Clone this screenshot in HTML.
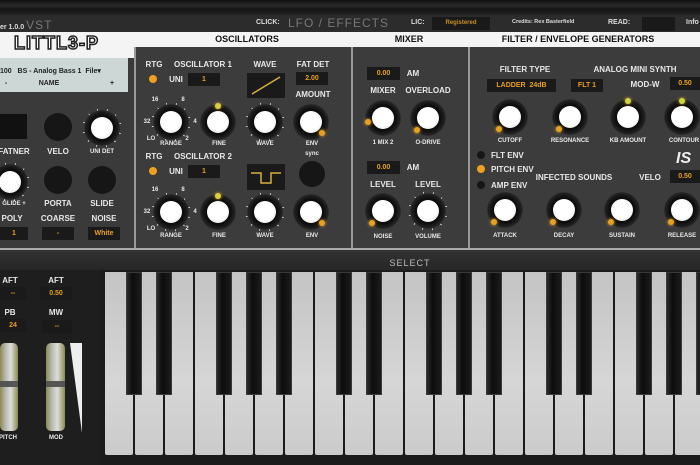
<!DOCTYPE html><html><head><style>
*{margin:0;padding:0;box-sizing:border-box}
body{width:700px;height:465px;overflow:hidden;background:#1b1b1b;font-family:"Liberation Sans",sans-serif;position:relative}
.a{position:absolute}
.t{position:absolute;color:#e8e8e8;font-weight:bold;font-size:8px;white-space:nowrap;transform:translateX(-50%)}
.s{font-size:6px}
.k{position:absolute;width:36px;height:36px;margin:-18px 0 0 -18px;border-radius:50%;background:radial-gradient(circle,#0e0e0e 50%,#222 66%,#2e2e2e 70%,transparent 72%)}
.k::after{content:"";position:absolute;left:7px;top:7px;width:22px;height:22px;border-radius:50%;background:radial-gradient(circle at 45% 40%,#fff 55%,#ddd 100%)}
.kt{position:absolute;width:40px;height:40px;margin:-20px 0 0 -20px;border-radius:50%;background:repeating-conic-gradient(from -135deg,#ddd 0 3deg,transparent 3deg 30deg);-webkit-mask:radial-gradient(circle,transparent 13px,#000 14px,#000 19px,transparent 20px)}
.dot{position:absolute;width:6px;height:6px;margin:-3px 0 0 -3px;border-radius:50%;background:#e8a020;box-shadow:0 0 3px #f0b030}
.led{position:absolute;width:8px;height:8px;margin:-4px 0 0 -4px;border-radius:50%}
.box{position:absolute;background:#1a1a1a;color:#e8a020;font-size:7px;font-weight:bold;text-align:center;line-height:13px;height:13px}
.bc{position:absolute;border-radius:50%;background:#161616}
.w{position:absolute;top:272px;width:28px;height:183px;background:linear-gradient(#c4c4c4,#d6d6d6 60%,#cbcbcb);border-radius:0 0 2px 2px}
.b{position:absolute;top:272px;width:16px;height:123px;background:linear-gradient(90deg,#2a2a2a,#0c0c0c 40%,#1c1c1c);border:1px solid #3a3a3a}
</style></head><body>
<div class="a" style="left:0;top:0;width:700px;height:15px;background:linear-gradient(#111,#2a2a2a 40%,#151515 60%,#222)"></div>
<div class="a" style="left:0;top:15px;width:700px;height:17px;background:#2c2c2c"></div>
<div class="a" style="left:0;top:18px;font-size:7px;color:#ddd;font-weight:bold">er 1.0.0 <span style="font-size:12px;color:#777;letter-spacing:1px;font-weight:normal">VST</span></div>
<div class="a" style="left:256px;top:19px;font-size:7px;color:#ddd;font-weight:bold">CLICK:</div>
<div class="a" style="left:288px;top:16px;font-size:12px;color:#777;letter-spacing:1px">LFO / EFFECTS</div>
<div class="a" style="left:411px;top:19px;font-size:7px;color:#ddd;font-weight:bold">LIC:</div>
<div class="box" style="left:432px;top:17px;width:58px;font-size:6px;color:#c89020">Registered</div>
<div class="a" style="left:512px;top:19px;font-size:5.5px;color:#ddd;font-weight:bold">Credits: Rex Basterfield</div>
<div class="a" style="left:608px;top:19px;font-size:7px;color:#ddd;font-weight:bold">READ:</div>
<div class="a" style="left:642px;top:17px;width:33px;height:14px;background:#1a1a1a"></div>
<div class="a" style="left:686px;top:19px;font-size:7px;color:#ddd;font-weight:bold">Info</div>
<div class="a" style="left:0;top:32px;width:700px;height:15px;background:#f4f4f4"></div>
<div class="a" style="left:0;top:32px;width:134px;height:26px;background:#f4f4f4"></div>
<div class="a" style="left:14px;top:33px;font-size:18px;font-weight:bold;color:#fff;-webkit-text-stroke:1.5px #222;letter-spacing:1px">LITTL3-P</div>
<div class="t" style="left:247px;top:34px;color:#111;font-size:9px">OSCILLATORS</div>
<div class="t" style="left:409px;top:34px;color:#111;font-size:9px">MIXER</div>
<div class="t" style="left:578px;top:34px;color:#111;font-size:9px">FILTER / ENVELOPE GENERATORS</div>
<div class="a" style="left:0;top:58px;width:134px;height:190px;background:#3a3a3a"></div>
<div class="a" style="left:134px;top:47px;width:217px;height:201px;background:#3c3c3c;border-left:2px solid #999"></div>
<div class="a" style="left:351px;top:47px;width:117px;height:201px;background:#3c3c3c;border-left:2px solid #999"></div>
<div class="a" style="left:468px;top:47px;width:232px;height:201px;background:#3c3c3c;border-left:2px solid #999"></div>
<div class="a" style="left:0;top:248px;width:700px;height:2px;background:#aaa"></div>
<div class="a" style="left:0;top:250px;width:700px;height:20px;background:linear-gradient(#333,#262626)"></div>
<div class="t" style="left:410px;top:258px;color:#bbb;font-size:9px;font-weight:normal;letter-spacing:1px">SELECT</div>
<div class="a" style="left:0;top:58px;width:128px;height:34px;background:#cdd7d6"></div>
<div class="a" style="left:0;top:67px;font-size:7px;font-weight:bold;color:#222">100&nbsp;&nbsp; BS - Analog Bass 1&nbsp; File▾</div>
<div class="t" style="left:49px;top:80px;color:#222;font-size:7px">NAME</div>
<div class="t" style="left:6px;top:80px;color:#222;font-size:7px">-</div>
<div class="t" style="left:112px;top:80px;color:#222;font-size:7px">+</div>
<div class="a" style="left:0;top:114px;width:27px;height:25px;background:#111"></div>
<div class="bc" style="left:44px;top:113px;width:28px;height:28px"></div>
<div class="bc" style="left:44px;top:166px;width:28px;height:28px"></div>
<div class="bc" style="left:88px;top:166px;width:28px;height:28px"></div>
<div class="kt" style="left:102px;top:128px"></div><div class="k" style="left:102px;top:128px"></div>
<div class="kt" style="left:10px;top:182px"></div><div class="k" style="left:10px;top:182px"></div>
<div class="t" style="left:14px;top:147px">FATNER</div>
<div class="t" style="left:58px;top:147px">VELO</div>
<div class="t s" style="left:102px;top:149px">UNI DET</div>
<div class="t s" style="left:14px;top:201px">GLIDE +</div>
<div class="t" style="left:58px;top:199px">PORTA</div>
<div class="t" style="left:102px;top:199px">SLIDE</div>
<div class="t" style="left:12px;top:214px">POLY</div>
<div class="t" style="left:58px;top:214px">COARSE</div>
<div class="t" style="left:104px;top:214px">NOISE</div>
<div class="box" style="left:0;top:227px;width:28px">1</div>
<div class="box" style="left:42px;top:227px;width:32px">-</div>
<div class="box" style="left:88px;top:227px;width:32px">White</div>
<div class="t" style="left:154px;top:60px">RTG</div>
<div class="t" style="left:203px;top:60px">OSCILLATOR 1</div>
<div class="t" style="left:265px;top:60px">WAVE</div>
<div class="t" style="left:313px;top:60px">FAT DET</div>
<div class="led" style="left:153px;top:79px;background:#f0a020"></div>
<div class="t" style="left:176px;top:75px">UNI</div>
<div class="box" style="left:188px;top:73px;width:32px">1</div>
<div class="a" style="left:247px;top:73px;width:38px;height:25px;background:#1a1a1a"><svg width="38" height="25"><line x1="5" y1="21" x2="33" y2="4" stroke="#d8b040" stroke-width="1.5"/></svg></div>
<div class="box" style="left:296px;top:72px;width:32px">2.00</div>
<div class="t" style="left:313px;top:90px">AMOUNT</div>
<div class="t s" style="left:155px;top:97px">16</div><div class="t s" style="left:183px;top:97px">8</div>
<div class="t s" style="left:147px;top:119px">32</div><div class="t s" style="left:195px;top:119px">4</div>
<div class="t s" style="left:151px;top:136px">LO</div><div class="t s" style="left:187px;top:136px">2</div>
<div class="t" style="left:154px;top:152px">RTG</div>
<div class="t" style="left:203px;top:152px">OSCILLATOR 2</div>
<div class="led" style="left:153px;top:171px;background:#f0a020"></div>
<div class="t" style="left:176px;top:167px">UNI</div>
<div class="box" style="left:188px;top:165px;width:32px">1</div>
<div class="a" style="left:247px;top:164px;width:38px;height:26px;background:#1a1a1a"><svg width="38" height="26"><path d="M4 9H14V19H24V9H34" fill="none" stroke="#d8b040" stroke-width="1.5"/></svg></div>
<div class="bc" style="left:299px;top:161px;width:26px;height:26px"></div>
<div class="t s" style="left:155px;top:187px">16</div><div class="t s" style="left:183px;top:187px">8</div>
<div class="t s" style="left:147px;top:209px">32</div><div class="t s" style="left:195px;top:209px">4</div>
<div class="t s" style="left:151px;top:226px">LO</div><div class="t s" style="left:187px;top:226px">2</div>
<div class="kt" style="left:171px;top:122px"></div><div class="k" style="left:171px;top:122px"></div>
<div class="k" style="left:218px;top:122px"></div><div class="dot" style="left:218px;top:106px;background:#d8d040"></div>
<div class="kt" style="left:265px;top:122px"></div><div class="k" style="left:265px;top:122px"></div>
<div class="k" style="left:311px;top:122px"></div><div class="dot" style="left:322px;top:133px"></div>
<div class="kt" style="left:171px;top:212px"></div><div class="k" style="left:171px;top:212px"></div>
<div class="k" style="left:218px;top:212px"></div><div class="dot" style="left:218px;top:196px;background:#d8d040"></div>
<div class="kt" style="left:265px;top:212px"></div><div class="k" style="left:265px;top:212px"></div>
<div class="k" style="left:311px;top:212px"></div><div class="dot" style="left:322px;top:223px"></div>
<div class="t s" style="left:171px;top:141px">RANGE</div><div class="t s" style="left:219px;top:141px">FINE</div><div class="t s" style="left:265px;top:141px">WAVE</div>
<div class="t s" style="left:312px;top:141px">ENV</div><div class="t s" style="left:312px;top:151px">sync</div>
<div class="t s" style="left:171px;top:233px">RANGE</div><div class="t s" style="left:219px;top:233px">FINE</div><div class="t s" style="left:265px;top:233px">WAVE</div><div class="t s" style="left:312px;top:233px">ENV</div>
<div class="box" style="left:367px;top:67px;width:33px">0.00</div>
<div class="t" style="left:413px;top:69px">AM</div>
<div class="t" style="left:383px;top:86px">MIXER</div>
<div class="t" style="left:428px;top:86px">OVERLOAD</div>
<div class="k" style="left:383px;top:118px"></div><div class="dot" style="left:368px;top:122px"></div>
<div class="k" style="left:428px;top:118px"></div><div class="dot" style="left:417px;top:130px"></div>
<div class="t s" style="left:383px;top:140px">1 MIX 2</div><div class="t s" style="left:428px;top:140px">O-DRIVE</div>
<div class="box" style="left:367px;top:161px;width:33px">0.00</div>
<div class="t" style="left:413px;top:163px">AM</div>
<div class="t" style="left:383px;top:180px">LEVEL</div><div class="t" style="left:428px;top:180px">LEVEL</div>
<div class="k" style="left:383px;top:211px"></div><div class="dot" style="left:372px;top:223px"></div>
<div class="kt" style="left:428px;top:211px"></div><div class="k" style="left:428px;top:211px"></div>
<div class="t s" style="left:383px;top:234px">NOISE</div><div class="t s" style="left:428px;top:234px">VOLUME</div>
<div class="t" style="left:525px;top:65px">FILTER TYPE</div>
<div class="t" style="left:635px;top:65px">ANALOG MINI SYNTH</div>
<div class="box" style="left:487px;top:79px;width:69px">LADDER&nbsp; 24dB</div>
<div class="box" style="left:571px;top:79px;width:32px">FLT 1</div>
<div class="t" style="left:645px;top:80px">MOD-W</div>
<div class="box" style="left:670px;top:77px;width:30px">0.50</div>
<div class="k" style="left:510px;top:117px"></div><div class="dot" style="left:499px;top:129px"></div>
<div class="k" style="left:570px;top:117px"></div><div class="dot" style="left:559px;top:129px"></div>
<div class="k" style="left:628px;top:117px"></div><div class="dot" style="left:628px;top:101px;background:#c8d840"></div>
<div class="k" style="left:682px;top:117px"></div><div class="dot" style="left:682px;top:101px;background:#c8d840"></div>
<div class="t s" style="left:510px;top:138px">CUTOFF</div><div class="t s" style="left:570px;top:138px">RESONANCE</div><div class="t s" style="left:628px;top:138px">KB AMOUNT</div><div class="t s" style="left:684px;top:138px">CONTOUR</div>
<div class="led" style="left:481px;top:155px;background:#161616"></div><div class="a" style="left:491px;top:151px;font-size:8px;font-weight:bold;color:#e8e8e8">FLT ENV</div>
<div class="led" style="left:481px;top:169px;background:#f0a020"></div><div class="a" style="left:491px;top:165px;font-size:8px;font-weight:bold;color:#e8e8e8">PITCH ENV</div>
<div class="led" style="left:481px;top:185px;background:#161616"></div><div class="a" style="left:491px;top:181px;font-size:8px;font-weight:bold;color:#e8e8e8">AMP ENV</div>
<div class="a" style="left:676px;top:150px;font-size:16px;font-weight:bold;color:#eee;font-style:italic">IS</div>
<div class="t" style="left:574px;top:173px">INFECTED SOUNDS</div>
<div class="t" style="left:650px;top:173px">VELO</div>
<div class="box" style="left:670px;top:170px;width:30px">0.50</div>
<div class="k" style="left:505px;top:210px"></div><div class="dot" style="left:494px;top:222px"></div>
<div class="k" style="left:564px;top:210px"></div><div class="dot" style="left:553px;top:222px"></div>
<div class="k" style="left:622px;top:210px"></div><div class="dot" style="left:611px;top:222px"></div>
<div class="k" style="left:682px;top:210px"></div><div class="dot" style="left:671px;top:222px"></div>
<div class="t s" style="left:505px;top:233px">ATTACK</div><div class="t s" style="left:564px;top:233px">DECAY</div><div class="t s" style="left:622px;top:233px">SUSTAIN</div><div class="t s" style="left:682px;top:233px">RELEASE</div>
<div class="a" style="left:0;top:270px;width:100px;height:195px;background:#1e1e1e"></div>
<div class="t" style="left:10px;top:276px">AFT</div><div class="t" style="left:56px;top:276px">AFT</div>
<div class="box" style="left:0;top:287px;width:26px">--</div><div class="box" style="left:40px;top:287px;width:32px">0.50</div>
<div class="t" style="left:10px;top:308px">PB</div><div class="t" style="left:56px;top:308px">MW</div>
<div class="box" style="left:0;top:319px;width:26px">24</div><div class="box" style="left:42px;top:320px;width:30px">--</div>
<div class="a" style="left:0;top:343px;width:18px;height:88px;border-radius:5px;background:linear-gradient(90deg,#8a8a50,#b8b8b0 30%,#ddd 60%,#8a8a50)"></div>
<div class="a" style="left:0;top:381px;width:18px;height:6px;background:#555"></div>
<div class="a" style="left:46px;top:343px;width:19px;height:88px;border-radius:5px;background:linear-gradient(90deg,#8a8a50,#b8b8b0 30%,#ddd 60%,#8a8a50)"></div>
<div class="a" style="left:46px;top:381px;width:19px;height:6px;background:#555"></div>
<svg class="a" style="left:68px;top:343px" width="16" height="92"><polygon points="2,0 14,0 14,90" fill="#eee"/></svg>
<div class="t s" style="left:8px;top:435px">PITCH</div><div class="t s" style="left:56px;top:435px">MOD</div>
<div class="w" style="left:105px"></div><div class="w" style="left:135px"></div><div class="w" style="left:165px"></div><div class="w" style="left:195px"></div><div class="w" style="left:225px"></div><div class="w" style="left:255px"></div><div class="w" style="left:285px"></div><div class="w" style="left:315px"></div><div class="w" style="left:345px"></div><div class="w" style="left:375px"></div><div class="w" style="left:405px"></div><div class="w" style="left:435px"></div><div class="w" style="left:465px"></div><div class="w" style="left:495px"></div><div class="w" style="left:525px"></div><div class="w" style="left:555px"></div><div class="w" style="left:585px"></div><div class="w" style="left:615px"></div><div class="w" style="left:645px"></div><div class="w" style="left:675px"></div>
<div class="b" style="left:126px"></div><div class="b" style="left:156px"></div><div class="b" style="left:216px"></div><div class="b" style="left:246px"></div><div class="b" style="left:276px"></div><div class="b" style="left:336px"></div><div class="b" style="left:366px"></div><div class="b" style="left:426px"></div><div class="b" style="left:456px"></div><div class="b" style="left:486px"></div><div class="b" style="left:546px"></div><div class="b" style="left:576px"></div><div class="b" style="left:636px"></div><div class="b" style="left:666px"></div><div class="b" style="left:696px"></div>
</body></html>
